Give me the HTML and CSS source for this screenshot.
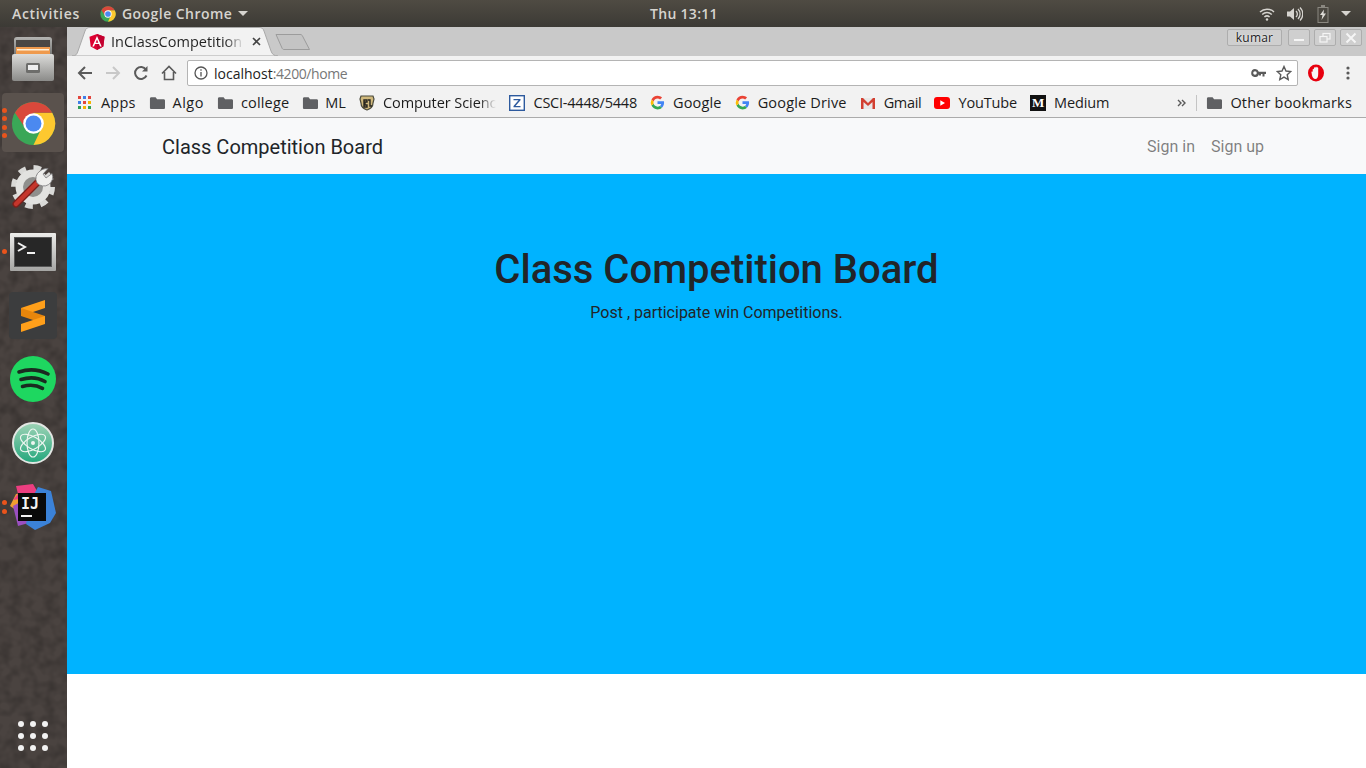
FILE: index.html
```html
<!DOCTYPE html>
<html>
	<head>
		<meta charset="utf-8">
		<title>InClassCompetition</title>
		<link rel="stylesheet" href="styles.css">
	</head>
	<body>
		<svg class="defs" width="0" height="0">
			<defs>
				<linearGradient id="cabinetFront" x1="0" y1="0" x2="0" y2="1">
					<stop offset="0" stop-color="#dcdcda"/>
					<stop offset="1" stop-color="#8b8b89"/>
				</linearGradient>
				<linearGradient id="cabinetTop" x1="0" y1="0" x2="0" y2="1">
					<stop offset="0" stop-color="#b4b4b2"/>
					<stop offset="1" stop-color="#6f6f6d"/>
				</linearGradient>
				<linearGradient id="termFrame" x1="0" y1="0" x2="0" y2="1">
					<stop offset="0" stop-color="#ededeb"/>
					<stop offset="1" stop-color="#a5a5a3"/>
				</linearGradient>
				<linearGradient id="atomFill" x1="0" y1="0" x2="0" y2="1">
					<stop offset="0" stop-color="#9ed3b6"/>
					<stop offset="1" stop-color="#23a77c"/>
				</linearGradient>
				<filter id="grain">
					<feTurbulence type="fractalNoise" baseFrequency="0.09" numOctaves="2"/>
					<feColorMatrix values="0 0 0 0 0  0 0 0 0 0  0 0 0 0 0  0.45 0 0 0 -0.16"/>
				</filter>
			</defs>
			<symbol id="chrome" viewBox="0 0 48 48">
				<circle cx="24" cy="24" r="23" fill="#3aa757"/>
				<path d="M24 24L33 28L24 47A23 23 0 0 0 44 12.5H24Z" fill="#fdc82f"/>
				<path d="M24 24L15.3 29L4.2 12.5A23 23 0 0 1 44 12.5H24Z" fill="#d9483b"/>
				<circle cx="24" cy="24" r="11" fill="#fff"/>
				<circle cx="24" cy="24" r="8.5" fill="#4b89f0"/>
			</symbol>
			<symbol id="folder" viewBox="-1 0 17 16">
				<path d="M0 3.5C0 2.7.6 2 1.4 2H6l1.6 2h7C15.400 4 16 4.600 16 5.400V13c0 .8-.6 1.400-1.400 1.400H1.400C.6 14.400 0 13.800 0 13Z" fill="#5f6063"/>
			</symbol>
			<symbol id="google" viewBox="0 0 48 48">
				<path d="M45 24.500c0-1.600-.1-3-.4-4.500H24v8.600h11.800c-.5 2.700-2 5-4.400 6.600l6.800 5.300C42.200 36.800 45 31.200 45 24.500Z" fill="#4285f4"/>
				<path d="M24 46c5.900 0 10.900-2 14.200-5.500l-6.800-5.300c-1.900 1.300-4.400 2-7.400 2-5.700 0-10.500-3.800-12.200-9l-7 5.400C8.300 41.300 15.600 46 24 46Z" fill="#34a853"/>
				<path d="M11.800 28.200a13 13 0 0 1 0-8.400l-7-5.400a22 22 0 0 0 0 19.200Z" fill="#fbbc05"/>
				<path d="M24 10.800c3.200 0 6.100 1.100 8.400 3.300l6.100-6.100C34.900 4.200 29.900 2 24 2 15.600 2 8.300 6.700 4.800 14.400l7 5.400c1.700-5.200 6.500-9 12.200-9Z" fill="#ea4335"/>
			</symbol>
		</svg>

		<div class="topbar">
			<div class="topLeft">
				<span class="activities">Activities</span>
				<svg class="topChrome" width="16" height="16"><use href="#chrome"/></svg>
				<span class="appName">Google Chrome</span>
				<span class="caret"></span>
			</div>
			<div class="clock">Thu 13:11</div>
			<div class="tray">
				<svg width="16" height="16" viewBox="0 0 16 16" fill="none" stroke="#d6d4cf" stroke-width="1.500">
					<path d="M1 6a10 10 0 0 1 14 0M3.200 8.500a7 7 0 0 1 9.600 0M5.400 11a4 4 0 0 1 5.200 0"/>
					<circle cx="8" cy="13.500" r="1.200" fill="#d6d4cf" stroke="none"/>
				</svg>
				<svg width="16" height="16" viewBox="0 0 16 16" fill="#d6d4cf">
					<path d="M0 5.500h3L7 2v12L3 10.500H0Z"/>
					<path d="M9 5a4 4 0 0 1 0 6M11 3a7 7 0 0 1 0 10M13 1.500a9 9 0 0 1 0 13" fill="none" stroke="#d6d4cf" stroke-width="1.300"/>
				</svg>
				<svg class="battery" width="12" height="18" viewBox="0 0 12 18">
					<path d="M4 0h4v2h3.500v16H.5V2H4Z" fill="#8a8780"/>
					<path d="M1.500 3h9v14h-9Z" fill="#4a4740"/>
					<path d="M7 4.500L3 10h2.500L4.500 15 9 8.500H6.500Z" fill="#dedcd7"/>
				</svg>
				<span class="caret"></span>
			</div>
		</div>

		<div class="desktop">
			<div class="dock">
				<svg class="dockGrain" width="67" height="741"><rect width="67" height="741" filter="url(#grain)"/></svg>
				<div class="dockItem">
					<svg width="44" height="44" viewBox="0 0 44 44">
						<rect x="3" y="0" width="38" height="20" rx="3" fill="url(#cabinetTop)"/>
						<rect x="5" y="3" width="34" height="10" fill="#4a4744"/>
						<rect x="5" y="10" width="34" height="7" fill="#ef9a4d"/>
						<rect x="6" y="12" width="32" height="1.500" fill="#fff2dc"/>
						<rect x="1" y="17" width="42" height="27" rx="2" fill="url(#cabinetFront)"/>
						<rect x="15" y="26" width="14" height="10" rx="1.500" fill="#6d6d6b"/>
						<rect x="17" y="28" width="10" height="5" fill="#eee"/>
					</svg>
				</div>
				<div class="dockItem activeItem">
					<span class="pips"><i></i><i></i><i></i><i></i></span>
					<svg width="45" height="45"><use href="#chrome"/></svg>
				</div>
				<div class="dockItem">
					<svg width="44" height="44" viewBox="0 0 44 44">
						<circle cx="22" cy="22" r="19.500" fill="none" stroke="#d9d9d7" stroke-width="5" stroke-dasharray="7.600 7.700"/>
						<circle cx="22" cy="22" r="17.500" fill="#e2e2e0"/>
						<circle cx="22" cy="22" r="10" fill="#8f8f8d"/>
						<path d="M5 39L28 16" stroke="#7c1f1a" stroke-width="7" stroke-linecap="round"/>
						<path d="M5 39L28 16" stroke="#c5362c" stroke-width="4.500" stroke-linecap="round"/>
						<path d="M26 18a9 9 0 0 1 3-12c2.500-2 5-2.500 8-2.500l-5 5.500 3 4 6-4.500a9 9 0 0 1-15 9.500Z" fill="#efefed" stroke="#77777a" stroke-width=".8"/>
					</svg>
				</div>
				<div class="dockItem termItem">
					<span class="pips"><i></i></span>
					<svg width="46" height="38" viewBox="0 0 46 38">
						<rect x="0" y="0" width="46" height="38" rx="1" fill="url(#termFrame)"/>
						<rect x="4" y="4" width="38" height="30" fill="#565656"/>
						<rect x="5" y="5" width="36" height="28" fill="#272727"/>
						<path d="M8 10l7 4-7 4" fill="none" stroke="#f2f2f2" stroke-width="2"/>
						<rect x="17" y="19" width="8" height="2" fill="#f2f2f2"/>
					</svg>
				</div>
				<div class="dockItem">
					<svg width="48" height="47" viewBox="0 0 48 47">
						<rect width="48" height="47" rx="4" fill="#3c3d3e"/>
						<path d="M36 8v8L12 24v-8Z" fill="#ff9f1a"/>
						<path d="M12 16l24 8v8L12 24Z" fill="#e8860c"/>
						<path d="M36 24v8L12 40v-8Z" fill="#ff9f1a"/>
					</svg>
				</div>
				<div class="dockItem">
					<svg width="46" height="46" viewBox="0 0 46 46">
						<circle cx="23" cy="23" r="23" fill="#1ed760"/>
						<path d="M9 16c9-3 20-2.500 29 2M11 23.500c8-2.500 17-2 24 2M12.500 30.500c7-2 14-1.500 20 1.800" fill="none" stroke="#1a2a20" stroke-width="3.600" stroke-linecap="round"/>
					</svg>
				</div>
				<div class="dockItem">
					<svg width="42" height="42" viewBox="0 0 42 42">
						<circle cx="21" cy="21" r="20" fill="url(#atomFill)" stroke="#e2e6e3" stroke-width="2"/>
						<g fill="none" stroke="#eef6f1" stroke-width="1.200">
							<ellipse cx="21" cy="21" rx="14" ry="6" transform="rotate(30 21 21)"/>
							<ellipse cx="21" cy="21" rx="14" ry="6" transform="rotate(-30 21 21)"/>
							<ellipse cx="21" cy="21" rx="14" ry="6" transform="rotate(90 21 21)"/>
						</g>
						<circle cx="21" cy="21" r="2" fill="#eef6f1"/>
					</svg>
				</div>
				<div class="dockItem">
					<span class="pips"><i></i><i></i></span>
					<svg width="46" height="46" viewBox="0 0 46 46">
						<path d="M0 22L6 10l12-2v22L6 26Z" fill="#f0a030"/>
						<path d="M6 2l17-2 7 12-27 4 5-6Z" fill="#ec3e80"/>
						<path d="M3 22l5 20 14-4L14 16Z" fill="#9a4fc0"/>
						<path d="M28 3l13 4 5 22-6 10-15 7-9-6 6-26Z" fill="#3b82d8"/>
						<rect x="8" y="9" width="28" height="28" fill="#0a0a0a"/>
						<text class="ijText" x="11" y="25">IJ</text>
						<rect x="11" y="31" width="11" height="2" fill="#f2f2f2"/>
					</svg>
				</div>
				<div class="appGrid">
					<i></i><i></i><i></i><i></i><i></i><i></i><i></i><i></i><i></i>
				</div>
			</div>

			<div class="browser">
				<div class="tabstrip">
					<div class="tab">
						<svg class="tabShape" width="206" height="29" viewBox="0 0 206 29">
							<path d="M0 29C4 29 5 27 6 24L13 4C14 1.500 15 .5 18 .5H187C190 .5 191 1.500 192 4L199 24C200 27 202 29 206 29Z" fill="#f2f2f2" stroke="#a9a9a9"/>
						</svg>
						<svg class="tabIcon" width="16" height="16" viewBox="0 0 16 16">
							<path d="M8 0L.5 2.700 1.700 12.500 8 16l6.300-3.500L15.500 2.700Z" fill="#dd0031"/>
							<path d="M8 0v16l6.300-3.500L15.500 2.700Z" fill="#c3002f"/>
							<path d="M8 2L3.300 12.500H5l1-2.400h4l1 2.400h1.700ZM6.700 8.700L8 5.500l1.300 3.200Z" fill="#fff"/>
						</svg>
						<span class="tabTitle">InClassCompetition</span>
						<svg class="tabClose" width="9" height="9" viewBox="0 0 9 9">
							<path d="M1 1l7 7M8 1L1 8" stroke="#444" stroke-width="1.600"/>
						</svg>
					</div>
					<svg class="newTab" width="36" height="18" viewBox="0 0 36 18">
						<path d="M1 1.500H25C26.500 1.500 27 2 27.500 3L34.500 16.500H9C8 16.500 7.500 16 7 15Z" fill="#c4c4c4" stroke="#9c9c9c"/>
					</svg>
					<div class="windowBtns">
						<span class="profile">kumar</span>
						<span class="winBtn">
							<svg width="12" height="12" viewBox="0 0 12 12"><rect x="1" y="7" width="10" height="2" fill="#f5f5f5"/></svg>
						</span>
						<span class="winBtn">
							<svg width="12" height="12" viewBox="0 0 12 12" fill="none" stroke="#f5f5f5" stroke-width="1.200"><rect x="4" y="1.500" width="7" height="5.500"/><rect x="1" y="4.500" width="7" height="5.500" fill="#cfcfcf"/></svg>
						</span>
						<span class="winBtn">
							<svg width="12" height="12" viewBox="0 0 12 12"><path d="M1.500 1.500l9 9M10.500 1.500l-9 9" stroke="#f5f5f5" stroke-width="2"/></svg>
						</span>
					</div>
				</div>

				<div class="toolbar">
					<svg class="navIcon" width="16" height="16" viewBox="0 0 16 16" fill="none" stroke="#5a5a5a" stroke-width="2"><path d="M15 8H2M8 2L2 8l6 6"/></svg>
					<svg class="navIcon" width="16" height="16" viewBox="0 0 16 16" fill="none" stroke="#c8c8c8" stroke-width="2"><path d="M1 8h13M8 2l6 6-6 6"/></svg>
					<svg class="navIcon" width="16" height="16" viewBox="0 0 16 16" fill="none" stroke="#5a5a5a" stroke-width="2"><path d="M13.500 10.500A6 6 0 1 1 13 4.500"/><path d="M14.500 1v5.500H9" fill="#5a5a5a" stroke="none"/></svg>
					<svg class="navIcon" width="16" height="16" viewBox="0 0 16 16" fill="none" stroke="#5a5a5a" stroke-width="1.600"><path d="M1 8.500L8 1.500l7 7M3.500 7v7.500h9V7"/></svg>
					<div class="omnibox">
						<svg width="14" height="14" viewBox="0 0 14 14" fill="none" stroke="#555" stroke-width="1.300"><circle cx="7" cy="7" r="6"/><path d="M7 6v4.500M7 3.300v1.500"/></svg>
						<span class="url">localhost<span class="urlRest">:4200/home</span></span>
						<svg class="keyIcon" width="15" height="8" viewBox="0 0 15 8"><path d="M4 0a4 4 0 0 1 3.800 2.700H15V5h-1.500v2.500h-2V5H10v1.500H8V5.300A4 4 0 1 1 4 0Zm0 2.200a1.800 1.800 0 1 0 0 3.600 1.800 1.800 0 0 0 0-3.600Z" fill="#5a5a5a"/></svg>
						<svg width="16" height="16" viewBox="0 0 16 16"><path d="M8 1.500l2 4.500 4.800.5-3.600 3.200 1 4.800L8 12.100l-4.200 2.400 1-4.800L1.200 6.500 6 6Z" fill="none" stroke="#5a5a5a" stroke-width="1.400"/></svg>
					</div>
					<svg class="opera" width="16" height="18" viewBox="0 0 16 18">
						<ellipse cx="8" cy="9" rx="8" ry="8.500" fill="#e8000f"/>
						<path d="M4.700 8V5.500c0-1 1.300-1 1.300 0V4c0-1 1.400-1 1.400 0v-.5c0-1 1.400-1 1.400 0V4c0-1 1.400-1 1.400 0v6c0 3-1 5-3 5-1.500 0-2.600-1.500-3.200-3.500L3.500 8.500c-.3-1 .8-1.400 1.200-.5Z" fill="#f6f6f6"/>
					</svg>
					<svg class="menuDots" width="4" height="14" viewBox="0 0 4 14" fill="#5a5a5a"><circle cx="2" cy="2" r="1.600"/><circle cx="2" cy="7" r="1.600"/><circle cx="2" cy="12" r="1.600"/></svg>
				</div>

				<div class="bookmarks">
					<div class="bookmark">
						<svg width="14" height="14" viewBox="0 0 14 14">
							<rect width="3" height="3" fill="#e2453c"/><rect x="5" width="3" height="3" fill="#3f7ee8"/><rect x="10" width="3" height="3" fill="#e2453c"/>
							<rect y="5" width="3" height="3" fill="#3f7ee8"/><rect x="5" y="5" width="3" height="3" fill="#e2453c"/><rect x="10" y="5" width="3" height="3" fill="#f4b400"/>
							<rect y="10" width="3" height="3" fill="#2f9e55"/><rect x="5" y="10" width="3" height="3" fill="#f4b400"/><rect x="10" y="10" width="3" height="3" fill="#2f9e55"/>
						</svg>
						<span class="apps slight">Apps</span>
					</div>
					<div class="bookmark"><svg width="16" height="16"><use href="#folder"/></svg><span class="looser">Algo</span></div>
					<div class="bookmark"><svg width="16" height="16"><use href="#folder"/></svg><span class="slight">college</span></div>
					<div class="bookmark"><svg width="16" height="16"><use href="#folder"/></svg><span class="mlText">ML</span></div>
					<div class="bookmark">
						<svg width="16" height="16" viewBox="0 0 16 16">
							<path d="M2 1h12l1 3-1 4c0 4-3 6-6 7-3-1-6-3-6-7L1 4Z" fill="#cfb87c" stroke="#4a4a3c" stroke-width="1.200"/>
							<path d="M5 5h3v2H6v3h2v2H5ZM9 5h2v6h2" fill="none" stroke="#26251f" stroke-width="1.400"/>
						</svg>
						<span class="fadeText">Computer Scienc</span>
					</div>
					<div class="bookmark">
						<svg width="16" height="16" viewBox="0 0 16 16">
							<rect x=".7" y=".7" width="14.600" height="14.600" fill="#fff" stroke="#2d5a9e" stroke-width="1.400"/>
							<path d="M4.500 4h7v1.300L6.500 11h5v1.200h-7v-1.300L9.500 5.200h-5Z" fill="#2d5a9e"/>
						</svg>
						<span class="tighter">CSCI-4448/5448</span>
					</div>
					<div class="bookmark"><svg width="15" height="15"><use href="#google"/></svg><span class="slight">Google</span></div>
					<div class="bookmark"><svg width="15" height="15"><use href="#google"/></svg><span class="slight">Google Drive</span></div>
					<div class="bookmark">
						<svg width="16" height="14" viewBox="0 0 16 14">
							<path d="M1 2h14v11H1Z" fill="#e8e8e8"/>
							<path d="M1 13V2h2l5 5 5-5h2v11h-2.500V6L8 10 3.500 6v7Z" fill="#d23f31"/>
						</svg>
						<span class="tightest">Gmail</span>
					</div>
					<div class="bookmark">
						<svg width="16" height="12" viewBox="0 0 16 12">
							<rect width="16" height="12" rx="3" fill="#f00"/>
							<path d="M6.300 3.300v5.400L11 6Z" fill="#fff"/>
						</svg>
						<span class="tight">YouTube</span>
					</div>
					<div class="bookmark">
						<span class="mediumIcon">M</span>
						<span class="tight">Medium</span>
					</div>
					<div class="bookmarkEnd">
						<svg width="9" height="8" viewBox="0 0 9 8" fill="none" stroke="#5a5a5a" stroke-width="1.400"><path d="M1 1l3 3-3 3M5 1l3 3-3 3"/></svg>
						<span class="separator"></span>
						<div class="bookmark"><svg width="16" height="16"><use href="#folder"/></svg><span class="slight">Other bookmarks</span></div>
					</div>
				</div>

				<div class="page">
					<nav class="navbar">
						<a class="brand">Class Competition Board</a>
						<div class="navLinks">
							<a class="navLink">Sign in</a>
							<a class="navLink">Sign up</a>
						</div>
					</nav>
					<div class="jumbotron">
						<h1>Class Competition Board</h1>
						<p>Post , participate win Competitions.</p>
					</div>
				</div>
			</div>
		</div>
	</body>
</html>
```

FILE: styles.css
```css
* {
	box-sizing: border-box;
}
html, body {
	height: 100%;
}
body {
	margin: 0;
	display: flex;
	flex-direction: column;
	height: 768px;
	overflow: hidden;
	font-family: "Open Sans", "Noto Sans", sans-serif;
	background-color: #fff;
}
.defs {
	position: absolute;
}

/* ubuntu top panel */
.topbar {
	height: 27px;
	flex: none;
	display: flex;
	align-items: center;
	justify-content: space-between;
	position: relative;
	padding: 0 15px 0 12px;
	background-image: linear-gradient(to bottom, #4f4b43, #3c3a35);
	color: #d6d4cf;
	font-size: 14px;
	font-weight: 600;
}
.topLeft {
	display: flex;
	align-items: center;
}
.activities {
	width: 88px;
	letter-spacing: 0.65px;
}
.appName {
	margin-left: 6px;
	width: 116px;
	letter-spacing: 0.45px;
}
.caret {
	display: inline-block;
	width: 0;
	height: 0;
	border-left: 5px solid transparent;
	border-right: 5px solid transparent;
	border-top: 5px solid #d6d4cf;
}
.clock {
	position: absolute;
	left: 650px;
	letter-spacing: 0.3px;
}
.tray {
	display: flex;
	align-items: center;
	gap: 12px;
}
.battery {
	margin-left: 2px;
}

.desktop {
	flex: 1;
	display: flex;
	min-height: 0;
}

/* launcher */
.dock {
	width: 67px;
	flex: none;
	display: flex;
	flex-direction: column;
	position: relative;
	padding-bottom: 17px;
	background-color: #4a4340;
}
.dockGrain {
	position: absolute;
	left: 0;
	top: 0;
}
.dockItem {
	height: 64px;
	flex: none;
	display: flex;
	align-items: center;
	justify-content: center;
	position: relative;
	padding-right: 1px;
}
.termItem {
	padding-top: 2px;
}
.activeItem::before {
	content: "";
	position: absolute;
	left: 2px;
	right: 3px;
	top: 2px;
	bottom: 3px;
	border-radius: 4px;
	background-color: #5a524d;
}
.activeItem svg {
	position: relative;
}
.pips {
	position: absolute;
	left: 2px;
	top: 0;
	bottom: 0;
	display: flex;
	flex-direction: column;
	justify-content: center;
	gap: 3.500px;
	z-index: 1;
}
.pips i {
	display: block;
	width: 5px;
	height: 5px;
	border-radius: 50%;
	background-color: #e9541c;
}
.appGrid {
	margin-top: auto;
	align-self: center;
	display: grid;
	grid-template-columns: repeat(3, 6px);
	gap: 6px;
	margin-right: 1px;
	position: relative;
}
.appGrid i {
	width: 6px;
	height: 6px;
	border-radius: 50%;
	background-color: #f2f2f2;
}
.ijText {
	font-family: "DejaVu Sans Mono", monospace;
	font-weight: 700;
	font-size: 15px;
	fill: #f2f2f2;
}

.browser {
	flex: 1;
	display: flex;
	flex-direction: column;
	min-width: 0;
}

/* tabs */
.tabstrip {
	height: 29px;
	flex: none;
	display: flex;
	align-items: flex-start;
	background-color: #c9c9c9;
	padding-left: 5px;
}
.tab {
	width: 206px;
	height: 29px;
	flex: none;
	display: flex;
	align-items: center;
	position: relative;
	padding: 0 0 0 17px;
}
.tabShape {
	position: absolute;
	left: 0;
	top: 0;
}
.tabIcon {
	position: relative;
	flex: none;
}
.tabTitle {
	position: relative;
	width: 133px;
	margin-left: 6px;
	overflow: hidden;
	white-space: nowrap;
	font-size: 14.500px;
	background-image: linear-gradient(to right, #222 86%, transparent 100%);
	-webkit-background-clip: text;
	background-clip: text;
	color: transparent;
}
.tabClose {
	position: relative;
	margin-left: 8px;
}
.newTab {
	margin: 6px 0 0 -3px;
	flex: none;
}
.windowBtns {
	margin-left: auto;
	display: flex;
	align-items: flex-start;
	gap: 4px;
	padding: 2px 4px 0 0;
}
.profile {
	width: 55px;
	height: 17px;
	margin-right: 2px;
	border: 1px solid #adadad;
	border-radius: 2px;
	background-color: #cfcfcf;
	color: #222;
	font-size: 12px;
	line-height: 15px;
	letter-spacing: 0.2px;
	text-align: center;
	text-shadow: 0 0 2px #fff;
}
.winBtn {
	width: 22px;
	height: 17px;
	display: flex;
	align-items: center;
	justify-content: center;
	border: 1px solid #adadad;
	border-radius: 2px;
	background-color: #cfcfcf;
}

/* address bar */
.toolbar {
	height: 34px;
	flex: none;
	display: flex;
	align-items: center;
	padding: 0 10px;
	background-color: #f2f2f2;
}
.navIcon {
	flex: none;
	margin-right: 12px;
}
.omnibox {
	width: 1111px;
	height: 26px;
	flex: none;
	margin-left: -2px;
	display: flex;
	align-items: center;
	padding: 0 5px 0 6px;
	background-color: #fff;
	border: 1px solid #b4b4b4;
	border-radius: 2px;
}
.url {
	margin-left: 6px;
	font-size: 14px;
	color: #222;
}
.urlRest {
	color: #777;
	letter-spacing: -0.4px;
}
.keyIcon {
	margin-left: auto;
	margin-right: 10px;
}
.opera {
	flex: none;
	margin-left: 10px;
}
.menuDots {
	flex: none;
	margin-left: 22px;
}

/* bookmarks bar */
.bookmarks {
	height: 28px;
	flex: none;
	display: flex;
	align-items: center;
	gap: 13px;
	padding: 0 14px 2px 11px;
	background-color: #f2f2f2;
	border-bottom: 1px solid #ababab;
	font-size: 14.500px;
	color: #1c1c1c;
	white-space: nowrap;
}
.bookmark {
	display: flex;
	align-items: center;
	gap: 8px;
}
.bookmark svg {
	flex: none;
}
.apps {
	margin-left: 1px;
}
.slight {
	letter-spacing: 0.17px;
}
.looser {
	letter-spacing: 0.5px;
}
.tight {
	letter-spacing: -0.15px;
}
.tighter {
	letter-spacing: -0.22px;
}
.tightest {
	letter-spacing: -0.3px;
}
.mlText {
	margin-left: -1px;
}
.fadeText {
	letter-spacing: -0.07px;
	background-image: linear-gradient(to right, #1c1c1c 85%, transparent 100%);
	-webkit-background-clip: text;
	background-clip: text;
	color: transparent;
}
.mediumIcon {
	width: 16px;
	height: 16px;
	background-color: #111;
	color: #fff;
	font-family: "Liberation Serif", serif;
	font-weight: 700;
	font-size: 13px;
	line-height: 16px;
	text-align: center;
}
.bookmarkEnd {
	margin-left: auto;
	display: flex;
	align-items: center;
	gap: 8px;
}
.separator {
	width: 1px;
	height: 16px;
	margin: 0 1px 0 2px;
	background-color: #c4c4c4;
}

/* page content */
.page {
	flex: 1;
	background-color: #fff;
	font-family: Roboto, sans-serif;
	color: #212529;
}
.navbar {
	height: 56px;
	display: flex;
	align-items: center;
	justify-content: space-between;
	padding: 0 94px 0 95px;
	background-color: #f8f9fa;
}
.brand {
	padding-top: 1px;
	font-size: 20px;
}
.navLinks {
	display: flex;
}
.navLink {
	padding: 0 8px;
	font-size: 16px;
	color: rgba(0, 0, 0, 0.5);
}
.jumbotron {
	height: 500px;
	padding-top: 72px;
	background-color: #00b3ff;
	text-align: center;
}
.jumbotron h1 {
	margin: 0 0 7px 0;
	font-size: 40px;
	font-weight: 500;
	line-height: 48px;
}
.jumbotron p {
	margin: 0;
	font-size: 16px;
	line-height: 24px;
}
```
